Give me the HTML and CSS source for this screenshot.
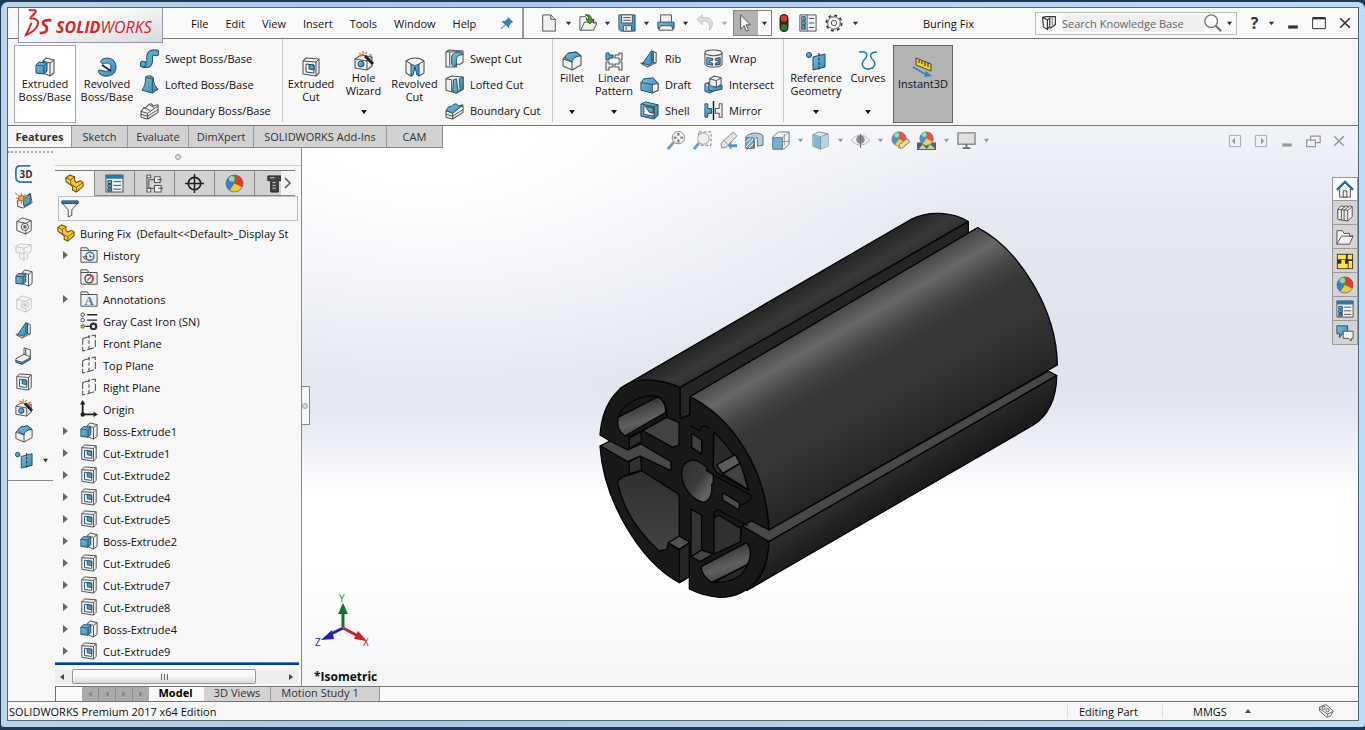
FILE: index.html
```html
<!DOCTYPE html>
<html lang="en">
<head>
<meta charset="utf-8">
<title>SOLIDWORKS - Buring Fix</title>
<link rel="stylesheet" href="styles.css">
</head>
<body>
<svg class="sprite" aria-hidden="true">
  <defs>
    <linearGradient id="blueg" x1="0" y1="0" x2="1" y2="1"><stop offset="0" stop-color="#7cc0e0"/><stop offset="1" stop-color="#2f87b6"/></linearGradient>
    <symbol id="boss" viewBox="0 0 20 20"><path class="w" d="M8 4l3-3 8 2v13l-4 3-7-3z"/><path class="n" d="M8 4l7 2 4-3M15 6v13"/><path class="b" d="M1 8l3-3 8 1v8l-3 3-8-1z"/><path class="n" d="M1 8l8 1v8M9 9l3-3"/></symbol>
    <symbol id="cut" viewBox="0 0 20 20"><path class="w" d="M2 4l3-3 13 1v14l-3 3-13-2z"/><path class="n" d="M2 4l13 1 3-3M15 5v14"/><path d="M5 7l8 1v8l-8-1z" fill="#fff" stroke="#1f4b64"/><path d="M8 7.500l5 .5v5l-5-1z" fill="#4d9cc5" stroke="#1f4b64"/></symbol>
    <symbol id="revolve" viewBox="0 0 20 20"><path class="b" d="M6 2c8-3 13 2 13 8 0 7-6 10-12 9-5-1-7-5-5-6l5 1c4 1 7-1 7-4 0-4-4-5-8-3-3-1-3-4 0-5z"/><path class="k" d="M5 8l9 6"/></symbol>
    <symbol id="sweep" viewBox="0 0 20 20"><path d="M3 16c6 2 8-1 7-6 0-5 2-7 7-6" fill="none" stroke="#214e69" stroke-width="7" stroke-linecap="round"/><path d="M3 16c6 2 8-1 7-6 0-5 2-7 7-6" fill="none" stroke="#5aa8d0" stroke-width="5" stroke-linecap="round"/><circle class="b" cx="3.5" cy="16" r="3"/></symbol>
    <symbol id="loft" viewBox="0 0 20 20"><path class="b" d="M6 2c2-2 7-1 8 1 0 6 2 9 5 12l-6 4-11-3c3-4 4-8 4-14z"/><path class="n" d="M6 2c1 2 6 2 8 1M13 4v15"/></symbol>
    <symbol id="bound" viewBox="0 0 20 20"><path class="w" d="M1 11l3-4c4 1 3-4 8-4l2 2 5-1v8L8 19l-7-2z"/><path class="n" d="M1 11l7 2 11-8M8 13v6M4 7l7 3M1 14l7 2 11-7M10 4l5 3"/></symbol>
    <symbol id="boundcut" viewBox="0 0 20 20"><path class="w" d="M1 11l18-6v7L8 19l-7-2z"/><path class="b" d="M1 10l3-4c4 1 3-3 8-3l2 2 5-1-11 9z"/><path class="n" d="M8 13v6M1 14l7 2 11-7"/></symbol>
    <symbol id="wizard" viewBox="0 0 20 20"><path class="w" d="M1 8l6-4 11 2v9l-5 4-12-2z"/><path class="n" d="M1 8l12 2 5-4M13 10v9"/><circle class="b" cx="7" cy="13" r="3"/><path d="M11 5l8 8" stroke="#222" stroke-width="3"/><path d="M9 0v4M5 2l3 2M13 1l-2 2M15 4h3M8 5H5" stroke="#e38a22" stroke-width="1.500"/></symbol>
    <symbol id="revcut" viewBox="0 0 20 20"><path class="w" d="M1 4c5-4 13-4 18 0v12l-5 3-4-9-4 9-5-3z"/><path class="b" d="M6 7l4 2 4-2v12l-2-1-2-8-2 8-2 1z"/><path class="n" d="M1 4l5 3M19 4l-5 3"/></symbol>
    <symbol id="sweptcut" viewBox="0 0 20 20"><path class="w" d="M1 3l3-2 15 1v12l-3 2h-4v3H1z"/><path class="n" d="M1 3h4v15M5 3l12 0"/><path class="b" d="M7 16V9c0-4 4-6 10-6l2 3c-5 0-7 2-7 5v5l-2 3z"/></symbol>
    <symbol id="loftcut" viewBox="0 0 20 20"><path class="w" d="M1 4l6-3 12 1v13l-7 4-11-3z"/><path class="n" d="M1 4l6 1v13"/><path class="b" d="M9 5l3-1 2 14-3 1-3-2zM15 4l4-2v13l-3 2z"/></symbol>
    <symbol id="fillet" viewBox="0 0 20 20"><path class="w" d="M1 8l6-6 7-1 5 4v9l-9 5-9-4z"/><path class="b" d="M3 7c1-4 3-5 5-5l6-1 5 4c-5 0-8 2-9 6z"/><path class="n" d="M1 8l9 3v8"/></symbol>
    <symbol id="pattern" viewBox="0 0 20 20"><path class="b" d="M2 2h3v2h4v3H5v2H2z"/><path class="w" d="M18 2h-3v2h-4v3h4v2h3zM2 11h3v2h4v3H5v3H2zM18 11h-3v2h-4v3h4v3h3z"/></symbol>
    <symbol id="rib" viewBox="0 0 20 20"><path class="w" d="M1 15l11-3V2l5 2v10L8 19z"/><path class="b" d="M3 15L12 2l2 1v11l-5 3z"/><path class="n" d="M12 4v9M14 3v11l3 1"/></symbol>
    <symbol id="draft" viewBox="0 0 20 20"><path class="b" d="M1 8l3-4 10-1 5 6v7l-6 3-12-3z"/><path class="w" d="M13 10l6-1v7l-6 3z"/><path class="n" d="M1 8l12 2"/></symbol>
    <symbol id="shell" viewBox="0 0 20 20"><path class="b" d="M1 3l5-2 13 3v11l-4 4L1 16z"/><path class="w" d="M4 5l11 2v9L4 14z"/><path class="b" d="M6 6l8 1v6l-4-1z"/><path class="n" d="M1 3l14 3 4-2M15 6v13"/></symbol>
    <symbol id="wrap" viewBox="0 0 20 20"><path class="w" d="M1 4v12c2 4 16 4 18 0V4"/><ellipse class="w" cx="10" cy="4" rx="9" ry="3"/><path class="b" d="M3 9l6 1v2H6v2l3 1v2l-6-1zM12 10l5-1v7l-5 1v-2l3-1v-2h-3z"/></symbol>
    <symbol id="intersect" viewBox="0 0 20 20"><path class="b" d="M1 9l4-1v8l4 1 10-2v-4l-9 2M1 9v8l5 2 4-2"/><path class="w" d="M6 4l5-3 7 2v7l-5 3-7-2z"/><path class="n" d="M6 4l7 2 5-3M13 6v7"/></symbol>
    <symbol id="mirror" viewBox="0 0 20 20"><path class="b" d="M1 3h3v5h4v5H4v4H1z"/><path class="w" d="M19 3h-3v5h-4v5h4v4h3z"/><path class="k" d="M10 0v20"/></symbol>
    <symbol id="refgeo" viewBox="0 0 20 20"><circle class="b" cx="3" cy="4" r="2.500"/><path class="b" d="M7 6l12-3v13L7 19z"/><path d="M13 2v18" stroke="#333" stroke-width="1.200" stroke-dasharray="3 1.500"/></symbol>
    <symbol id="curves" viewBox="0 0 20 20"><path d="M1 1c10-1 9 4 5 8-4 5 0 10 5 9 7-1 7-7 3-10-3-4-1-7 5-7" fill="none" stroke="#257ca8" stroke-width="1.500"/></symbol>
    <symbol id="instant" viewBox="0 0 20 20"><path d="M3 1l15 6v7L3 8z" fill="#f5cf3a" stroke="#4c4320"/><path d="M6 3v3M9 4v3M12 5v4M15 6v4" stroke="#222"/><path d="M0 9l12 7 1-2 6 5-8 1 1-2L0 11z" fill="#3b82bd"/></symbol>
    <symbol id="part" viewBox="0 0 20 20"><path d="M1 8V4l4-3 5 2v4l2 2 4-2 3 2v4l-7 6-4-2v-4z" fill="#f6c92e" stroke="#77580b" stroke-width="1.200"/><path d="M1 4l5 2 4-3M6 6v5l6 3 7-5M12 14v5" fill="none" stroke="#77580b"/></symbol>
    <symbol id="list" viewBox="0 0 20 20"><path class="w" d="M1 1h18v18H1z"/><path d="M1 1h18v4H1z" fill="#267aa8"/><path class="b" d="M3 7h4v3H3zM3 11h4v3H3zM3 15h4v3H3z"/><path class="n" d="M9 8h8M9 12h8M9 16h8"/></symbol>
    <symbol id="filelist" viewBox="0 0 20 20"><path class="w" d="M1 1h18v18H1z"/><path class="b" d="M3 3h4v4H3zM3 8h4v4H3zM3 13h4v4H3z"/><path class="n" d="M9 1v18M11 5h6M11 10h6M11 15h6"/></symbol>
    <symbol id="config" viewBox="0 0 20 20"><path class="w" d="M2 1h4v3H2zM2 1v18h4v-4H2M10 3h6v6h-6zM10 12h7v7h-7z"/><path class="n" d="M4 6h6M4 6v9h6M13 6h5M14 15h5"/></symbol>
    <symbol id="target" viewBox="0 0 20 20"><circle cx="10" cy="10" r="6.500" fill="none" stroke="#222" stroke-width="1.800"/><path class="k" d="M10 0v20M0 10h20"/></symbol>
    <symbol id="ball" viewBox="0 0 20 20"><circle cx="10" cy="10" r="9" fill="#3480ce"/><path d="M10 10L3 4a9 9 0 0 1 8-3z" fill="#33af54"/><path d="M10 10L11 1a9 9 0 0 1 7 13z" fill="#e63830"/><path d="M10 10l8 4A9 9 0 0 1 5 17z" fill="#f0cc2a"/><circle cx="7" cy="5" r="3" fill="#fff" opacity=".5"/><circle cx="10" cy="10" r="9" fill="none" stroke="#555" opacity=".5"/></symbol>
    <symbol id="ballpen" viewBox="0 0 20 20"><use href="#ball" width="17" height="17"/><path d="M8 18l1-4 8-6 3 3-8 7z" fill="#f4d877" stroke="#655"/></symbol>
    <symbol id="scene" viewBox="0 0 20 20"><path d="M0 12h20v8H0z" fill="#414841"/><path d="M2 19l4-5 4 5 4-5 5 5" fill="#a8d1a8"/><use href="#ball" x="2" width="16" height="16"/></symbol>
    <symbol id="bolt" viewBox="0 0 20 20"><path d="M3 2h14v5h-3v12H6V7H3z" fill="#444" stroke="#222"/><path d="M8 9h3M8 12h3M8 15h3M5 4h5" stroke="#ddd"/></symbol>
    <symbol id="funnel" viewBox="0 0 20 20"><path class="w" d="M1 3h18l-7 8v6l-4 2v-8z"/><path d="M1 1h18v3H1z" fill="#2a7daa" stroke="#24485c"/></symbol>
    <symbol id="folder" viewBox="0 0 20 20"><path class="w" d="M1 18V2h7l2 3h9v13z"/><path class="n" d="M1 5h9"/></symbol>
    <symbol id="history" viewBox="0 0 20 20"><use href="#folder" width="20" height="20"/><circle cx="11" cy="11.500" r="4.500" fill="#fff" stroke="#25749e" stroke-width="1.600"/><path class="n" d="M11 9v3h3M3 12h5l-2 3z"/></symbol>
    <symbol id="sensor" viewBox="0 0 20 20"><use href="#folder" width="20" height="20"/><circle cx="10" cy="12" r="4.500" fill="#fff" stroke="#444" stroke-width="1.500"/><path d="M8 14l5-5M14 8v7" stroke="#d23b4b" stroke-width="1.500"/></symbol>
    <symbol id="note" viewBox="0 0 20 20"><use href="#folder" width="20" height="20"/><text x="5" y="17" class="glyph">A</text></symbol>
    <symbol id="material" viewBox="0 0 20 20"><circle class="w" cx="3" cy="3" r="2"/><circle class="w" cx="3" cy="9" r="2"/><circle cx="3" cy="16" r="2" fill="#d3b52d" stroke="#555"/><path class="k" d="M8 3h11M8 9h11M6 16h7"/><circle cx="15" cy="16" r="3" fill="none" stroke="#333" stroke-width="2.500"/></symbol>
    <symbol id="plane" viewBox="0 0 20 20"><path d="M3 5l14-4v14L3 19z" fill="#f8f8f8" stroke="#333" stroke-dasharray="8 2"/><path d="M10 1v18" stroke="#333" stroke-dasharray="4 2"/></symbol>
    <symbol id="origin" viewBox="0 0 20 20"><path d="M3 4v12h13" fill="none" stroke="#222" stroke-width="2"/><path d="M0 5l3-5 3 5zM15 13l5 3-5 3z" fill="#222"/><circle cx="3" cy="16" r="2.500" fill="#222"/></symbol>
    <symbol id="sketch3" viewBox="0 0 20 20"><path d="M17 1H6Q1 1 1 6v7q0 6 6 6h12" fill="none" stroke="#2a7daa" stroke-width="2"/><text x="5" y="14" class="three">3D</text></symbol>
    <symbol id="spark" viewBox="0 0 20 20"><path class="w" d="M3 10l14-7 2 10-10 6-6-2z"/><path class="b" d="M9 10l8-7v11l-7 3z"/><path d="M0 2l12 10M7 2v12M1 8h13M2 13L12 3" stroke="#b85c27"/><circle cx="7" cy="8" r="3" fill="#efae43" stroke="#9b591c"/></symbol>
    <symbol id="hole" viewBox="0 0 20 20"><path class="w" d="M2 5l6-4 10 3v11l-6 4-10-4z"/><path class="n" d="M2 5l10 2 6-3M12 7v12"/><circle class="w" cx="11" cy="11" r="4"/><circle cx="11" cy="11" r="2" fill="#666"/></symbol>
    <symbol id="combine" viewBox="0 0 20 20"><path class="w" d="M1 4l5-3 12 1v7l-4 3v5l-5 2-4-3v-5l-4-1z"/><path class="n" d="M1 4l9 2 8-4M5 11l5 1 4-3M10 6v13"/></symbol>
    <symbol id="bend" viewBox="0 0 20 20"><path class="w" d="M1 13l9-5V1l7 2v10L8 19l-7-3z"/><path class="b" d="M1 15l7 2 9-5v2L8 19l-7-2z"/><path class="n" d="M10 8l7 3M12 2v7"/></symbol>
    <symbol id="new" viewBox="0 0 20 20"><path class="w" d="M3 1h9l5 5v13H3z"/><path class="n" d="M12 1v5h5"/></symbol>
    <symbol id="open" viewBox="0 0 20 20"><path class="w" d="M1 18V3h6l2 3h7v4h4l-4 8z"/><path class="n" d="M2 18l4-9h13"/><path d="M7 1c5-1 7 2 7 5h3l-5 5-4-5h3c0-2-1-4-4-5z" fill="#48a51c" stroke="#236209"/></symbol>
    <symbol id="save" viewBox="0 0 20 20"><path class="b" d="M1 1h18v18H3l-2-2z"/><path class="w" d="M4 1h12v9H4zM6 13h9v6H6z"/><path class="n" d="M6 4h8M6 7h8M9 14v4"/></symbol>
    <symbol id="print" viewBox="0 0 20 20"><path class="w" d="M4 9V1h12v8"/><path class="b" d="M1 9h18v7H1z"/><path class="w" d="M4 13h12l2 5H2z"/></symbol>
    <symbol id="undo" viewBox="0 0 20 20"><path d="M7 1L1 6l6 6V8c6-1 9 2 8 10 6-7 4-15-8-14z" fill="#ddd" stroke="#bcbcbc"/></symbol>
    <symbol id="cursor" viewBox="0 0 20 20"><path class="w" d="M4 1l11 11h-5l3 6-3 1-2-6-4 4z"/></symbol>
    <symbol id="traffic" viewBox="0 0 20 20"><rect x="5" y="0" width="10" height="20" rx="5" fill="#32251f"/><circle cx="10" cy="5" r="3.600" fill="#cf3b2e"/><circle cx="10" cy="15" r="3.600" fill="#2f7a3b"/></symbol>
    <symbol id="gear" viewBox="0 0 20 20"><circle class="n" cx="10" cy="10" r="3"/><circle class="n" cx="10" cy="10" r="7"/><circle cx="10" cy="10" r="8.500" fill="none" stroke="#3c3c3c" stroke-width="2" stroke-dasharray="3.300 3.370"/></symbol>
    <symbol id="pin" viewBox="0 0 20 20"><path d="M11 1l8 8-3 1-3 4v4l-5-5-6 6-1-1 6-6-5-5h5l4-3z" fill="#3182b5"/></symbol>
    <symbol id="book" viewBox="0 0 20 20"><path d="M2 3l6 3v12l-5-3zM8 6l3-2v10l-3 4M2 3l4-1 12 0v10l-7 5" fill="none" stroke="#3c3c3c" stroke-width="1.500"/><path class="n" d="M14 3v10"/></symbol>
    <symbol id="lens" viewBox="0 0 20 20"><circle cx="8" cy="8" r="7" fill="none" stroke="#777" stroke-width="1.500"/><path d="M13 13l6 6" stroke="#777" stroke-width="2.500"/></symbol>
    <symbol id="zoomfit" viewBox="0 0 20 20"><circle cx="12" cy="7" r="6.500" fill="#f1f1f1" stroke="#777"/><path d="M7 12l-6 7" stroke="#4b91b5" stroke-width="3"/><path d="M12 2v3M12 9v3M7 7h3M14 7h3" stroke="#555" stroke-width="2"/></symbol>
    <symbol id="zoomarea" viewBox="0 0 20 20"><path d="M6 1h13v14H6z" fill="none" stroke="#555" stroke-dasharray="3 2"/><circle cx="11" cy="8" r="6" fill="#eee" stroke="#888"/><path d="M6 13l-5 6" stroke="#4b91b5" stroke-width="3"/></symbol>
    <symbol id="prev" viewBox="0 0 20 20"><path d="M2 13L15 1l4 4L8 17l-5 1z" fill="#ddd" stroke="#777"/><path class="n" d="M5 10l5 5" opacity=".5"/><path d="M9 15l4-4v3h6v3h-6v3z" fill="#3b87b2"/></symbol>
    <symbol id="section" viewBox="0 0 20 20"><path d="M1 6c4-5 14-5 18-1v10l-6 1V7c-2 0-3 1-3 3v8l-9 1z" fill="#a9c7d5" stroke="#555"/><path d="M1 7h8v11H1z" fill="#5ca2bf" stroke="#3d6270"/><path d="M1 17L9 8M1 12l5-5M4 18l5-5" stroke="#fff"/></symbol>
    <symbol id="view" viewBox="0 0 20 20"><path d="M2 6l6-5h11v13l-5 5H2z" fill="#edf1f3" stroke="#566"/><path d="M2 7h10v12H2z" fill="#61a5c8" stroke="#467"/><path class="n" d="M12 7l7-6M14 3v12M12 11h7" opacity=".6"/></symbol>
    <symbol id="cube" viewBox="0 0 20 20"><path d="M2 4l6-3 10 2v13l-8 3-8-3z" fill="#cde1eb" stroke="#66767d"/><path d="M3 5l7 2v12l-7-3z" fill="#65abd0"/><path d="M10 7l8-4v13l-8 3z" fill="#a7cfdf"/><path class="n" d="M2 4l8 2 8-3M10 6v13" opacity=".6"/></symbol>
    <symbol id="eye" viewBox="0 0 20 20"><path d="M0 10q10-12 20 0-10 10-20 0z" fill="#eee" stroke="#aaa"/><circle cx="10" cy="9" r="4.500" fill="#777"/><path d="M10 3v15" stroke="#555"/></symbol>
    <symbol id="monitor" viewBox="0 0 20 20"><path d="M1 2h18v12H1z" fill="#ddd" stroke="#777" stroke-width="1.500"/><path d="M10 14v4M6 18h8" stroke="#555" stroke-width="2"/></symbol>
    <symbol id="home" viewBox="0 0 20 20"><path class="w" d="M4 9l6-6 6 6v10H4z"/><path class="w" d="M8 12h4v7H8z"/><path d="M1 11l9-9 9 9" fill="none" stroke="#286f93" stroke-width="2.500"/></symbol>
    <symbol id="books" viewBox="0 0 20 20"><path class="w" d="M2 6l4-4 3 1 2-1 3 1 2-1 2 1v11l-5 5-11-2z"/><path class="n" d="M2 6l11 1 5-4M6 6l4-3M9 7l5-4M6 6v12M9 7v11M13 7v12"/></symbol>
    <symbol id="openf" viewBox="0 0 20 20"><path class="w" d="M1 18V3h6l2 3h6v3h4l-4 9z"/><path class="n" d="M1 18l5-9h13"/></symbol>
    <symbol id="palette" viewBox="0 0 20 20"><path d="M1 2h18v17H1z" fill="#333"/><path d="M2 3h9v5H2zM13 3h5v5h-5zM2 13h4v-4h4v4h3v5H2zM14 10h4v8h-4z" fill="#ffe34d"/></symbol>
    <symbol id="chat" viewBox="0 0 20 20"><path class="b" d="M1 2h12v9H7l-3 4v-4H1z"/><path class="w" d="M8 8h11v8h-2v3l-3-3H8z"/></symbol>
    <symbol id="caret" viewBox="0 0 8 8"><path d="M1 2h6L4 6z" fill="currentColor"/></symbol>
    <symbol id="close" viewBox="0 0 20 20"><path d="M4 4l12 12M16 4L4 16" stroke="currentColor" stroke-width="2"/></symbol>
    <symbol id="min" viewBox="0 0 20 20"><path d="M4 15h12" stroke="currentColor" stroke-width="4"/></symbol>
    <symbol id="max" viewBox="0 0 20 20"><path d="M2 4h16v13H2z" fill="none" stroke="currentColor" stroke-width="1.200"/><path d="M2 4h16" stroke="currentColor" stroke-width="3"/></symbol>
    <symbol id="restore" viewBox="0 0 20 20"><path d="M2 9h11v8H2zM7 9V4h12v8h-6" fill="none" stroke="currentColor" stroke-width="1.500"/></symbol>
    <symbol id="boxl" viewBox="0 0 20 20"><path d="M3 3h14v14H3z" fill="none" stroke="currentColor"/><path d="M10 6v8l-4-4z" fill="currentColor"/></symbol>
    <symbol id="boxr" viewBox="0 0 20 20"><path d="M3 3h14v14H3z" fill="none" stroke="currentColor"/><path d="M10 6v8l4-4z" fill="currentColor"/></symbol>
    <symbol id="tag" viewBox="0 0 20 20"><path class="w" d="M2 5l8-3 9 8-3 6-5 2-9-8z"/><path class="n" d="M2 7l10 7 6-3M12 14v3"/><circle class="n" cx="7" cy="6" r="2"/><circle class="n" cx="12" cy="9" r="2"/></symbol>
  </defs>
</svg>

<div class="window">
 <div class="frame">
  <header class="titlebar">
    <div class="logo">
      <svg viewBox="0 0 84 90" aria-hidden="true"><path d="M14 7h20q6 3-14 21" fill="none" stroke="#d8232b" stroke-width="6"/><path d="M16 31q32 0 25 20Q34 70 6 81l17-37" fill="none" stroke="#d8232b" stroke-width="6"/><path d="M82 37q-24-3-25 7 0 5 10 11 8 20-20 20" fill="none" stroke="#d8232b" stroke-width="8"/></svg>
      <span class="brand"><b>SOLID</b>WORKS</span>
    </div>
    <nav class="menu"><button>File</button><button>Edit</button><button>View</button><button>Insert</button><button>Tools</button><button>Window</button><button>Help</button></nav>
    <button class="pin" aria-label="Pin menu"><svg><use href="#pin"/></svg></button>
    <div class="quick">
      <button aria-label="New"><svg><use href="#new"/></svg></button><button class="dd" aria-label="New options"><svg><use href="#caret"/></svg></button>
      <button aria-label="Open"><svg><use href="#open"/></svg></button><button class="dd" aria-label="Open options"><svg><use href="#caret"/></svg></button>
      <button aria-label="Save"><svg><use href="#save"/></svg></button><button class="dd" aria-label="Save options"><svg><use href="#caret"/></svg></button>
      <button aria-label="Print"><svg><use href="#print"/></svg></button><button class="dd" aria-label="Print options"><svg><use href="#caret"/></svg></button>
      <button aria-label="Undo"><svg><use href="#undo"/></svg></button><button class="dd dim" aria-label="Undo options"><svg><use href="#caret"/></svg></button>
      <span class="select"><button aria-label="Select"><svg><use href="#cursor"/></svg></button><button class="dd" aria-label="Select options"><svg><use href="#caret"/></svg></button></span>
      <button aria-label="Rebuild"><svg><use href="#traffic"/></svg></button>
      <button aria-label="File properties"><svg><use href="#filelist"/></svg></button>
      <button aria-label="Options"><svg><use href="#gear"/></svg></button><button class="dd" aria-label="More options"><svg><use href="#caret"/></svg></button>
    </div>
    <h1>Buring Fix</h1>
    <div class="search"><svg><use href="#book"/></svg><input type="text" aria-label="Search Knowledge Base" placeholder="Search Knowledge Base"><button aria-label="Search"><svg><use href="#lens"/></svg></button><button class="dd" aria-label="Search options"><svg><use href="#caret"/></svg></button></div>
    <div class="winctl"><button class="help">?</button><button class="dd" aria-label="Help options"><svg><use href="#caret"/></svg></button><button aria-label="Minimize"><svg><use href="#min"/></svg></button><button aria-label="Maximize"><svg><use href="#max"/></svg></button><button aria-label="Close"><svg><use href="#close"/></svg></button></div>
  </header>

  <section class="ribbon" aria-label="Features">
    <div class="group g1">
      <button class="big hot"><svg><use href="#boss"/></svg>Extruded<br>Boss/Base</button>
      <button class="big"><svg><use href="#revolve"/></svg>Revolved<br>Boss/Base</button>
      <div class="stack boss-stack"><button><svg><use href="#sweep"/></svg>Swept Boss/Base</button><button><svg><use href="#loft"/></svg>Lofted Boss/Base</button><button><svg><use href="#bound"/></svg>Boundary Boss/Base</button></div>
    </div>
    <div class="group">
      <button class="big mid"><svg><use href="#cut"/></svg>Extruded<br>Cut</button>
      <button class="big mid drop"><svg><use href="#wizard"/></svg>Hole<br>Wizard<svg class="car"><use href="#caret"/></svg></button>
      <button class="big mid"><svg><use href="#revcut"/></svg>Revolved<br>Cut</button>
      <div class="stack cut-stack"><button><svg><use href="#sweptcut"/></svg>Swept Cut</button><button><svg><use href="#loftcut"/></svg>Lofted Cut</button><button><svg><use href="#boundcut"/></svg>Boundary Cut</button></div>
    </div>
    <div class="group">
      <button class="big narrow drop"><svg><use href="#fillet"/></svg>Fillet<svg class="car"><use href="#caret"/></svg></button>
      <button class="big pat drop"><svg><use href="#pattern"/></svg>Linear<br>Pattern<svg class="car"><use href="#caret"/></svg></button>
      <div class="stack rib-stack"><button><svg><use href="#rib"/></svg>Rib</button><button><svg><use href="#draft"/></svg>Draft</button><button><svg><use href="#shell"/></svg>Shell</button></div>
      <div class="stack wrap-stack"><button><svg><use href="#wrap"/></svg>Wrap</button><button><svg><use href="#intersect"/></svg>Intersect</button><button><svg><use href="#mirror"/></svg>Mirror</button></div>
    </div>
    <div class="group last">
      <button class="big drop"><svg><use href="#refgeo"/></svg>Reference<br>Geometry<svg class="car"><use href="#caret"/></svg></button>
      <button class="big narrow drop"><svg><use href="#curves"/></svg>Curves<svg class="car"><use href="#caret"/></svg></button>
      <button class="big pressed"><svg><use href="#instant"/></svg>Instant3D</button>
    </div>
  </section>

  <main class="workspace">
    <div class="tophead">
      <nav class="tabs"><button class="t1 on">Features</button><button class="t2">Sketch</button><button class="t3">Evaluate</button><button class="t4">DimXpert</button><button class="t5">SOLIDWORKS Add-Ins</button><button class="t6">CAM</button></nav>
      <div class="hud">
        <button aria-label="Zoom to fit"><svg><use href="#zoomfit"/></svg></button><button aria-label="Zoom to area"><svg><use href="#zoomarea"/></svg></button><button aria-label="Previous view"><svg><use href="#prev"/></svg></button><button aria-label="Section view"><svg><use href="#section"/></svg></button><button aria-label="View orientation"><svg><use href="#view"/></svg></button><button class="dd" aria-label="Orientations"><svg><use href="#caret"/></svg></button><button aria-label="Display style"><svg><use href="#cube"/></svg></button><button class="dd" aria-label="Display styles"><svg><use href="#caret"/></svg></button><button aria-label="Hide or show items"><svg><use href="#eye"/></svg></button><button class="dd" aria-label="Item types"><svg><use href="#caret"/></svg></button><button aria-label="Edit appearance"><svg><use href="#ballpen"/></svg></button><button aria-label="Apply scene"><svg><use href="#scene"/></svg></button><button class="dd" aria-label="Scenes"><svg><use href="#caret"/></svg></button><button aria-label="View settings"><svg><use href="#monitor"/></svg></button><button class="dd" aria-label="View setting list"><svg><use href="#caret"/></svg></button>
      </div>
      <div class="docctl"><button aria-label="Previous pane"><svg><use href="#boxl"/></svg></button><button aria-label="Next pane"><svg><use href="#boxr"/></svg></button><button aria-label="Minimize document"><svg><use href="#min"/></svg></button><button aria-label="Restore document"><svg><use href="#restore"/></svg></button><button aria-label="Close document"><svg><use href="#close"/></svg></button></div>
    </div>

    <div class="work">
      <aside class="side">
        <div class="sideset">
          <button aria-label="3D sketch"><svg><use href="#sketch3"/></svg></button><button aria-label="Instant sketch"><svg><use href="#spark"/></svg></button><button aria-label="Hole"><svg><use href="#hole"/></svg></button><button class="off" aria-label="Combine"><svg><use href="#combine"/></svg></button><button aria-label="Boss"><svg><use href="#boss"/></svg></button><button class="off" aria-label="Cavity"><svg><use href="#hole"/></svg></button><button aria-label="Rib"><svg><use href="#rib"/></svg></button><button aria-label="Bend"><svg><use href="#bend"/></svg></button><button aria-label="Cut"><svg><use href="#cut"/></svg></button><button aria-label="Hole wizard"><svg><use href="#wizard"/></svg></button><button aria-label="Fillet"><svg><use href="#fillet"/></svg></button>
          <span class="pair"><button aria-label="Reference geometry"><svg><use href="#refgeo"/></svg></button><button class="dd" aria-label="Reference geometry options"><svg><use href="#caret"/></svg></button></span>
        </div>
      </aside>
      <section class="panel" aria-label="Feature tree">
        <div class="grip"><i></i></div>
        <div class="ptabs"><button class="on" aria-label="Feature manager"><svg><use href="#part"/></svg></button><button aria-label="Properties"><svg><use href="#list"/></svg></button><button aria-label="Configurations"><svg><use href="#config"/></svg></button><button aria-label="DimXpert manager"><svg><use href="#target"/></svg></button><button aria-label="Display manager"><svg><use href="#ball"/></svg></button><button aria-label="CAM tree"><svg><use href="#bolt"/></svg></button><button class="more" aria-label="More tabs"><svg viewBox="0 0 8 14"><path d="M1 2l5 5-5 5" fill="none" stroke="#555" stroke-width="1.500"/></svg></button></div>
        <label class="filter"><svg><use href="#funnel"/></svg><input type="text" aria-label="Filter tree"></label>
        <div class="root"><svg><use href="#part"/></svg><span>Buring Fix&nbsp; (Default&lt;&lt;Default&gt;_Display St</span></div>
        <ul class="tree">
          <li><button class="tw" aria-label="Expand"></button><svg><use href="#history"/></svg>History</li>
          <li class="leaf"><svg><use href="#sensor"/></svg>Sensors</li>
          <li><button class="tw" aria-label="Expand"></button><svg><use href="#note"/></svg>Annotations</li>
          <li class="leaf"><svg><use href="#material"/></svg>Gray Cast Iron (SN)</li>
          <li class="leaf"><svg><use href="#plane"/></svg>Front Plane</li>
          <li class="leaf"><svg><use href="#plane"/></svg>Top Plane</li>
          <li class="leaf"><svg><use href="#plane"/></svg>Right Plane</li>
          <li class="leaf"><svg><use href="#origin"/></svg>Origin</li>
          <li><button class="tw" aria-label="Expand"></button><svg><use href="#boss"/></svg>Boss-Extrude1</li>
          <li><button class="tw" aria-label="Expand"></button><svg><use href="#cut"/></svg>Cut-Extrude1</li>
          <li><button class="tw" aria-label="Expand"></button><svg><use href="#cut"/></svg>Cut-Extrude2</li>
          <li><button class="tw" aria-label="Expand"></button><svg><use href="#cut"/></svg>Cut-Extrude4</li>
          <li><button class="tw" aria-label="Expand"></button><svg><use href="#cut"/></svg>Cut-Extrude5</li>
          <li><button class="tw" aria-label="Expand"></button><svg><use href="#boss"/></svg>Boss-Extrude2</li>
          <li><button class="tw" aria-label="Expand"></button><svg><use href="#cut"/></svg>Cut-Extrude6</li>
          <li><button class="tw" aria-label="Expand"></button><svg><use href="#cut"/></svg>Cut-Extrude7</li>
          <li><button class="tw" aria-label="Expand"></button><svg><use href="#cut"/></svg>Cut-Extrude8</li>
          <li><button class="tw" aria-label="Expand"></button><svg><use href="#boss"/></svg>Boss-Extrude4</li>
          <li><button class="tw" aria-label="Expand"></button><svg><use href="#cut"/></svg>Cut-Extrude9</li>
        </ul>
        <div class="rollback"></div>
        <div class="hscroll"><i class="left"></i><span class="thumb"><b></b><b></b><b></b></span><i class="right"></i></div>
      </section>
      <section class="canvas" aria-label="Model view">
        <svg class="scene" viewBox="302 148 1030 538" preserveAspectRatio="xMinYMin meet">
          <defs>
            <linearGradient id="mbody" gradientUnits="userSpaceOnUse" x1="300" y1="590" x2="532" y2="993"><stop offset="0" stop-color="#4b4b4b"/><stop offset=".12" stop-color="#686868"/><stop offset=".28" stop-color="#434343"/><stop offset=".4" stop-color="#373737"/><stop offset=".65" stop-color="#353535"/><stop offset="1" stop-color="#252525"/></linearGradient>
            <linearGradient id="tbody" gradientUnits="userSpaceOnUse" x1="130" y1="545" x2="185" y2="640"><stop offset="0" stop-color="#252525"/><stop offset=".5" stop-color="#383838"/><stop offset="1" stop-color="#2c2c2c"/></linearGradient>
            <linearGradient id="lbody" gradientUnits="userSpaceOnUse" x1="537" y1="1025" x2="590" y2="1110"><stop offset="0" stop-color="#2e2e2e"/><stop offset="1" stop-color="#1b1b1b"/></linearGradient>
            <linearGradient id="tube" x1=".3" y1="0" x2=".7" y2="1"><stop offset="0" stop-color="#252525"/><stop offset=".6" stop-color="#606060"/><stop offset="1" stop-color="#343434"/></linearGradient>
            <linearGradient id="bore" x1="0" y1="0" x2="1" y2="1"><stop offset="0" stop-color="#303030"/><stop offset=".5" stop-color="#3a3a3a"/><stop offset=".8" stop-color="#646464"/><stop offset="1" stop-color="#383838"/></linearGradient>
            <linearGradient id="pocket" x1="0" y1="0" x2="0" y2="1"><stop offset="0" stop-color="#2f2f2f"/><stop offset="1" stop-color="#434343"/></linearGradient>
          </defs>
          <g transform="translate(590 200) scale(.33333)" stroke="#050505" stroke-width="4" stroke-linejoin="round">
            <path d="M90 565L965 57C1020 30 1090 37 1135 65L270 563Z" fill="url(#tbody)"/>
            <path d="M270 563L1135 65V103L300 595V645L270 655Z" fill="#252525"/>
            <path d="M30 705C38 600 95 540 165 540 205 540 245 550 270 563V655L300 645V590C420 650 530 800 537 990L485 963 458 978 537 1025C535 1120 480 1192 390 1192 350 1190 320 1178 298 1167V1130L268 1148C150 1085 40 900 30 738L60 723Z" fill="#191919"/>
            <path d="M300 590L1163 83C1290 150 1400 330 1402 495L537 990C530 800 420 650 300 590Z" fill="url(#mbody)"/>
            <path d="M537 990L1375 513 1400 527 537 1025 458 978 485 963Z" fill="#484848"/>
            <path d="M537 1025L1400 527C1400 600 1370 650 1330 675L470 1172C520 1140 535 1080 537 1025Z" fill="url(#lbody)"/>
            <path d="M85 655C90 615 150 585 195 588 225 595 232 625 230 655L158 692 120 710C92 705 80 680 85 655Z" fill="#181818"/>
            <path d="M84 652L200 592C215 592 230 615 226 638L105 708C86 695 80 675 84 652Z" fill="url(#tube)"/>
            <path d="M158 692L230 652 267 667V735L248 742Z" fill="#424242"/>
            <path d="M118 715L152 695 155 725 118 746Z" fill="#2c2c2c"/>
            <path d="M32 738L60 723 113 750 153 732 243 785V812L150 768 113 785Z" fill="#484848"/>
            <path d="M118 785L152 768 155 810 118 822Z" fill="#303030"/>
            <path d="M85 855Q75 835 118 825L155 812 262 880Q268 888 268 895V1010L235 1030 230 1048 207 1053C150 1000 100 930 85 855Z" fill="url(#pocket)"/>
            <path d="M235 1028L268 1008 300 1027 268 1048Z" fill="#515151"/>
            <path d="M268 1048L298 1030V1130L268 1148Z" fill="#262626"/>
            <path d="M303 928L335 945V1050L303 1070Z" fill="#343434"/>
            <path d="M303 1070L335 1050 370 1062 330 1085Z" fill="#444"/>
            <path d="M372 955L385 945 452 985V1025L372 1062Z" fill="#303030"/>
            <path d="M333 1100L470 1028C487 1045 482 1080 470 1096L365 1147C345 1135 335 1118 333 1100Z" fill="url(#tube)"/>
            <path d="M372 1147L472 1094C462 1130 420 1150 372 1147Z" fill="#282828"/>
            <path d="M275 820C275 790 300 770 330 787L350 801V812L370 824V850L365 852C368 880 360 905 340 907 305 900 275 860 275 820Z" fill="url(#bore)"/>
            <path d="M305 700L335 720V762L305 742Z" fill="#404040"/>
            <path d="M372 697C420 740 465 810 475 870L380 818 370 800Z" fill="#292929"/>
            <path d="M380 795L436 764 450 790 398 820Z" fill="#5c5c5c"/>
            <path d="M398 822L450 790C462 818 468 845 474 868Z" fill="#424242"/>
            <path d="M398 878L448 908V930L398 900Z" fill="#4b4b4b"/>
            <path d="M300 675L330 693Q330 677 350 679L360 687M335 720V765M370 700V795M370 825L482 885V900L455 915M372 955V935L385 930L475 978M455 978L450 1020" fill="none"/>
          </g>
          <g class="triad">
            <path d="M343 627V613" stroke="#147023" stroke-width="3"/><path d="M338 614l5-11 5 11z" fill="#147023"/>
            <path d="M343 628l-14 7" stroke="#2222b8" stroke-width="3"/><path d="M332 630l-11 10 13-1z" fill="#2222b8"/>
            <path d="M343 628l15 8" stroke="#c52024" stroke-width="3"/><path d="M358 631l-4 8 13 2z" fill="#c52024"/>
            <text x="339" y="602" fill="#20852b">Y</text><text x="315" y="646" fill="#2222b8">Z</text><text x="363" y="646" fill="#d32222">X</text>
          </g>
        </svg>
        <button class="collapse" aria-label="Collapse panel"><i></i></button>
        <div class="orient">*Isometric</div>
      </section>
      <nav class="taskpane" aria-label="Task pane">
        <button class="on" aria-label="Resources"><svg><use href="#home"/></svg></button><button aria-label="Design library"><svg><use href="#books"/></svg></button><button aria-label="File explorer"><svg><use href="#openf"/></svg></button><button aria-label="View palette"><svg><use href="#palette"/></svg></button><button aria-label="Appearances"><svg><use href="#ball"/></svg></button><button aria-label="Custom properties"><svg><use href="#list"/></svg></button><button aria-label="Forum"><svg><use href="#chat"/></svg></button>
      </nav>
    </div>
  </main>

  <nav class="doctabs"><span class="steps"><button aria-label="First"><i class="left bar"></i></button><button aria-label="Previous"><i class="left"></i></button><button aria-label="Next"><i class="right"></i></button><button aria-label="Last"><i class="right"></i></button></span><button class="m1 on">Model</button><button class="m2">3D Views</button><button class="m3">Motion Study 1</button></nav>
  <footer class="status"><span class="edition">SOLIDWORKS Premium 2017 x64 Edition</span><span class="editing">Editing Part</span><button class="units">MMGS <i></i></button><button class="tagbtn" aria-label="Tags"><svg><use href="#tag"/></svg></button></footer>
 </div>
</div>
</body>
</html>
```
FILE: styles.css
```css
* { box-sizing: border-box; }
body { margin: 0; padding: 2px 0 3px 1px; background: #1f3a55; color: #111; font: 11px/13px "Open Sans", "Noto Sans", sans-serif; }
button { border: 0; padding: 0; margin: 0; background: none; color: inherit; font: inherit; white-space: nowrap; flex: none; }
input { border: 0; padding: 0; background: none; font: inherit; min-width: 0; outline: 0; }
svg { display: block; width: 18px; height: 18px; flex: none; }
.sprite { position: absolute; width: 0; height: 0; }

.w { fill: #f0f0f0; stroke: #555; stroke-width: 1.1; stroke-linejoin: round; }
.b { fill: url(#blueg); stroke: #1f4b64; stroke-width: 1; stroke-linejoin: round; }
.n { fill: none; stroke: #4a4a4a; stroke-width: 1; stroke-linejoin: round; }
.k { fill: none; stroke: #222; stroke-width: 1.6; }
.glyph { font: bold 14px "Liberation Serif", serif; fill: #267aa8; }
.three { font: bold 11px "Open Sans", sans-serif; fill: #333; }

.window { min-height: calc(100vh - 5px); display: flex; padding: 5px 6px 6px; background: linear-gradient(90deg, #bcd3ea, #a9c6e8 30%, #b9d4ef 70%, #bddcf8); border-radius: 7px 7px 3px 3px; }
.frame { flex: 1; min-width: 0; display: flex; flex-direction: column; border: 1px solid #596673; background: #f7f7f7; }

.titlebar { display: flex; align-items: center; height: 31px; border-bottom: 1px solid #777; background: #fafafa; }
.logo { align-self: flex-start; display: flex; align-items: center; width: 145px; height: 35px; margin-left: 10px; padding: 0 5px; gap: 4px; border: 1px solid #9297a5; border-top: 0; background: linear-gradient(165deg, #fff 30%, #d9d9dc); position: relative; flex: none; }
.logo svg { width: 28px; height: 30px; margin-bottom: 4px; }
.brand { color: #d8232b; font: italic 16px/20px "Open Sans", sans-serif; padding-top: 3px; }
.menu { display: flex; width: 320px; padding-left: 28px; gap: 17px; flex: none; }
.pin svg { width: 14px; height: 14px; }
.pin { width: 41px; height: 30px; padding: 0 0 0 17px; border-right: 2px solid #999; }
.quick { display: flex; align-items: center; flex: none; margin-left: 14px; }
.quick button { width: 22px; display: flex; justify-content: center; }
.quick .dd { width: 17px; }
.dd svg { width: 7px; height: 7px; }
.dd { display: flex; justify-content: center; align-items: center; width: 16px; color: #333; }
.dim { color: #aaa; }
.select { display: flex; height: 26px; border: 1px solid #8b8579; margin-right: 1px; }
.select button { width: 24px; align-items: center; background: #b2b2b2; }
.select .dd { width: 13px; background: none; }
.select + button + button, .select + button + button + button { width: 26px; }
h1 { margin: 0 0 0 59px; font: inherit; white-space: nowrap; }
.search { display: flex; align-items: center; width: 202px; height: 23px; margin-left: auto; padding-left: 5px; border: 1px solid #bbb; color: #666; flex: none; }
.search > svg { width: 16px; height: 16px; }
.search input { flex: 1; height: 17px; margin-left: 5px; background: #efeff1; }
.search input::placeholder { color: #666; opacity: 1; }
.search .dd { width: 14px; }
.winctl { display: flex; align-items: center; margin-left: 9px; flex: none; color: #333; }
.winctl button { width: 26px; display: flex; justify-content: center; }
.winctl .help { width: 17px; font-size: 16px; font-weight: 700; }
.winctl .dd { width: 17px; }
.winctl svg { width: 16px; height: 16px; }
.winctl .dd svg { width: 7px; height: 7px; }

.ribbon { display: flex; height: 87px; padding-left: 6px; border-bottom: 1px solid #777; background: #f7f7f7; }
.group { display: flex; align-items: flex-start; padding-top: 6px; flex: none; }
.group:not(.last) { border-right: 1px solid #c8c8c8; margin-bottom: 3px; padding-right: 7px; margin-right: 1px; }
.group.g1 { padding-right: 10px; }
.big { width: 62px; height: 78px; padding: 12px 0 20px; display: block; text-align: center; position: relative; }
.big svg { margin: 0 auto; width: 20px; height: 20px; }
.big.hot { border: 1px solid #a9a9b4; background: #fff; padding: 11px 0 19px; }
.big.mid { width: 51px; }
.big.mid:first-child { width: 54px; }
.big.narrow { width: 36px; }
.big.pat { width: 48px; }
.big.drop { padding: 6px 0 26px; }
.big.narrow.drop { padding-bottom: 39px; }
.big .car { position: absolute; left: 0; right: 0; bottom: 7px; width: 8px; height: 8px; }
.big.pressed { width: 60px; margin-left: 4px; padding: 11px 0 32px; background: #b3b3b3; border: 1px solid #666; }
.last .narrow { width: 42px; }
.stack { display: grid; grid-auto-rows: 26px; }
.stack button { display: flex; align-items: center; gap: 6px; text-align: left; }
.stack svg { width: 19px; height: 19px; }
.boss-stack { width: 134px; padding-left: 2px; }
.cut-stack { width: 105px; padding-left: 5px; }
.rib-stack { width: 64px; padding-left: 2px; }
.wrap-stack { width: 74px; padding-left: 2px; }

.workspace { flex: 1; display: flex; flex-direction: column; background: radial-gradient(ellipse 560px 300px at 420px 0, #fff 20%, rgba(255, 255, 255, 0)), linear-gradient(#f1f3f8 0, #e5e8f1 90px, #dfe3ee 250px, #e5e8f1 290px, #fff 370px, #fff 440px, #f5f5f8 560px); }
.tophead { display: flex; height: 22px; align-items: flex-start; }
.tabs { display: flex; height: 22px; border-bottom: 1px solid #888; border-right: 1px solid #888; color: #333; flex: none; }
.tabs button { background: #d2d2d2; border-left: 1px solid #999; }
.tabs .on { background: #f7f7f7; font-weight: 700; border-left: 0; }
.t1 { width: 63px; } .t2 { width: 56px; } .t3 { width: 61px; } .t4 { width: 65px; } .t5 { width: 133px; } .t6 { width: 56px; }
.hud { display: flex; align-items: center; margin-left: 220px; padding-top: 5px; opacity: .85; }
.hud button { width: 26px; display: flex; justify-content: center; }
.hud svg { width: 19px; height: 19px; }
.hud .dd { width: 14px; color: #888; }
.hud .dd svg { width: 7px; height: 7px; }
.docctl { display: flex; margin-left: auto; padding: 7px 6px 0 0; color: #999; }
.docctl button { width: 26px; display: flex; justify-content: center; }
.docctl svg { width: 16px; height: 16px; }

.work { flex: 1; display: flex; }
.side { width: 47px; background: #f7f7f7; flex: none; }
.sideset { display: flex; flex-direction: column; gap: 8px; width: 45px; margin-top: 3px; padding: 12px 0 11px 7px; border-top: 2px dotted #aaa; border-bottom: 1px solid #888; }
.sideset > button { width: 18px; }
.pair { display: flex; gap: 4px; }
.off { opacity: .3; filter: grayscale(1); }
.panel { width: 247px; flex: none; display: flex; flex-direction: column; background: #f7f7f7; border-right: 1px solid #888; }
.grip { height: 18px; display: flex; align-items: center; justify-content: center; border-bottom: 1px solid #ccc; flex: none; }
.grip i, .collapse i { width: 6px; height: 6px; border: 1px solid #999; border-radius: 50%; background: #ddd; }
.ptabs { display: flex; height: 26px; margin: 4px 0 0; border-top: 1px solid #777; position: relative; overflow: hidden; width: 240px; }
.ptabs button { width: 40px; display: flex; align-items: center; justify-content: center; background: #d2d2d2; border-right: 1px solid #888; border-bottom: 1px solid #888; }
.ptabs svg { width: 19px; height: 19px; }
.ptabs .on { background: #f7f7f7; border-bottom: 0; }
.ptabs .more { position: absolute; right: 0; top: 0; width: 14px; height: 24px; border: 0; background: #f4f4f4; }
.ptabs .more svg { width: 8px; height: 14px; }
.filter { display: flex; align-items: center; height: 25px; width: 240px; margin: 0 0 1px 3px; padding-left: 2px; border: 1px solid #bdbdc4; gap: 4px; }
.filter input { flex: 1; }
.root { height: 22px; display: flex; align-items: center; gap: 5px; padding-left: 2px; white-space: nowrap; }
.tree { list-style: none; margin: 0; padding: 0; }
.tree li { display: flex; align-items: center; height: 22px; padding-left: 8px; gap: 5px; }
.tree .leaf { padding-left: 25px; }
.tw { width: 12px; height: 8px; display: flex; }
.tw::before { content: ""; border-left: 5px solid #666; border-top: 4px solid transparent; border-bottom: 4px solid transparent; }
.rollback { height: 3px; border-top: 1px solid #3f92c4; border-bottom: 2px solid #1c2fa3; width: 244px; }
.hscroll { display: flex; align-items: center; gap: 4px; height: 15px; margin: 4px 3px 2px 0; padding: 0 5px; background: #eee; }
.thumb { display: flex; align-items: center; justify-content: center; gap: 2px; width: 184px; height: 15px; margin: 0 auto 0 4px; border: 1px solid #999; border-radius: 2px; background: linear-gradient(#f8f8f8 45%, #d8d8d8); }
.thumb b { width: 1px; height: 6px; background: #666; }
.left { border-right: 4px solid #444; border-top: 3px solid transparent; border-bottom: 3px solid transparent; }
.right { border-left: 4px solid #444; border-top: 3px solid transparent; border-bottom: 3px solid transparent; }
.canvas { flex: 1; position: relative; min-width: 0; }
.canvas .scene { position: absolute; left: 0; top: 0; width: 100%; height: 100%; }
.triad { font: 10px "Open Sans", sans-serif; }
.collapse { position: absolute; left: 0; top: 238px; width: 8px; height: 39px; display: flex; align-items: center; border: 1px solid #888; border-left: 0; background: #f7f7f7; }
.orient { position: absolute; left: 12px; bottom: 3px; font-size: 12px; font-weight: 700; color: #111; }
.taskpane { width: 26px; padding-top: 29px; flex: none; }
.taskpane button { display: flex; align-items: center; justify-content: center; width: 26px; height: 24px; background: #d4d4d4; border: 1px solid #999; border-top: 0; }
.taskpane .on { background: #fafafa; border-top: 1px solid #999; }

.doctabs { display: flex; height: 15px; margin-left: 47px; border-left: 1px solid #47847e; border-top: 1px solid #777; background: #fafafa; }
.steps { display: flex; gap: 1px; margin-left: 26px; width: 65px; background: #8d8d8d; }
.steps button { width: 16px; display: flex; align-items: center; justify-content: center; background: #aaa; }
.steps i { opacity: .35; }
.m1, .m2, .m3 { padding-bottom: 3px; line-height: 11px; }
.m1 { width: 57px; font-weight: 700; color: #000; }
.m2 { width: 67px; } .m3 { width: 109px; }
.m2, .m3 { background: #d2d2d2; border-right: 1px solid #999; color: #333; }
.m3 { padding-right: 10px; }
.status { display: flex; align-items: center; height: 19px; border-top: 1px solid #777; }
.edition { flex: 1; padding-left: 1px; }
.editing { width: 96px; padding-left: 11px; border: 1px solid #ddd; border-width: 0 1px; }
.units { width: 130px; padding-left: 30px; display: flex; align-items: center; gap: 18px; }
.units i { border-bottom: 4px solid #444; border-left: 3px solid transparent; border-right: 3px solid transparent; }
.tagbtn { width: 65px; padding-left: 25px; }
.tagbtn svg { width: 16px; height: 16px; }
```
